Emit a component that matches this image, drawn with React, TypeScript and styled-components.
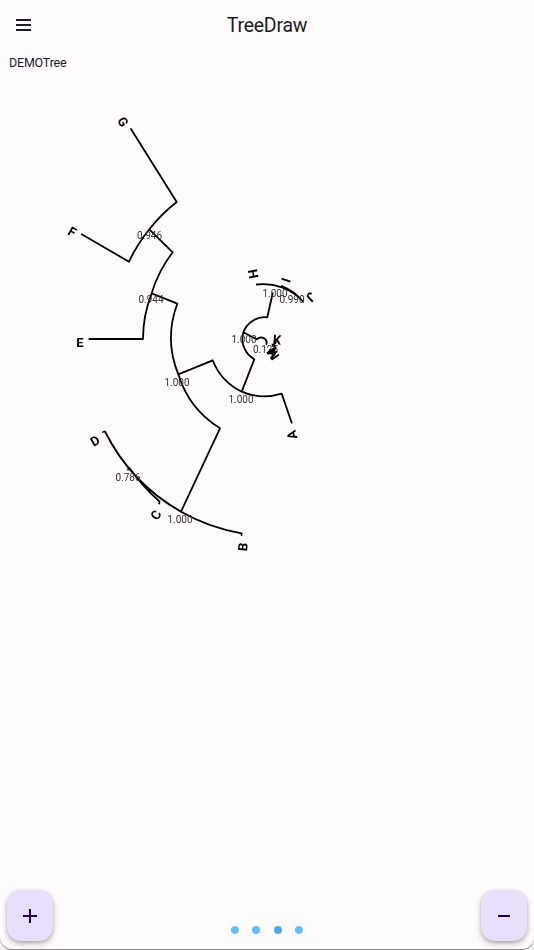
import React from "react";
import styled, { createGlobalStyle } from "styled-components";

const Global = createGlobalStyle`
  html, body { margin: 0; padding: 0; background: #f1eff1; }
  #root { width: 534px; height: 950px; }
`;

const Screen = styled.div`
  width: 534px;
  height: 949px;
  display: flex;
  flex-direction: column;
  background: #fffbfe;
  border-radius: 0 0 12px 12px;
  box-shadow: 0 1px 0 #8e8e8e;
  overflow: hidden;
  font-family: Roboto, "Liberation Sans", sans-serif;
  color: #1c1b1f;
`;

const AppBar = styled.header`
  height: 50px;
  display: flex;
  align-items: center;
  justify-content: center;
  position: relative;
  flex: none;
`;

const MenuButton = styled.div`
  position: absolute;
  left: 16px;
  top: 19px;
  width: 15px;
  height: 12px;
  display: flex;
  flex-direction: column;
  justify-content: space-between;
`;

const MenuBar = styled.span`
  display: block;
  height: 2px;
  background: #1c1b1f;
`;

const Title = styled.h1`
  margin: 0;
  font-size: 19.5px;
  letter-spacing: -0.25px;
  font-weight: 400;
`;

const TreeName = styled.div`
  flex: none;
  padding: 5px 0 0 9px;
  font-size: 12.5px;
  letter-spacing: -0.2px;
  line-height: 16px;
`;

const Canvas = styled.main`
  flex: 1;
  min-height: 0;
`;

const TreeSvg = styled.svg`
  display: block;
  width: 534px;
  height: 820px;
  will-change: transform;
`;

const Branches = styled.path`
  fill: none;
  stroke: #000;
  stroke-width: 1.8;
  stroke-linecap: round;
  stroke-linejoin: round;
`;

const LeafLabel = styled.text`
  font-size: 13px;
  font-weight: 700;
  fill: #000;
  text-anchor: middle;
  dominant-baseline: central;
`;

const Support = styled.text`
  font-size: 10px;
  fill: #333;
  text-anchor: middle;
  dominant-baseline: central;
`;

const BottomBar = styled.footer`
  flex: none;
  height: 51px;
  margin-bottom: 8px;
  padding: 0 7px;
  display: flex;
  justify-content: space-between;
`;

const Fab = styled.button`
  width: 46px;
  height: 51px;
  border: 0;
  padding: 0;
  border-radius: 14px;
  background: #e8dffc;
  color: #21005d;
  display: flex;
  align-items: center;
  justify-content: center;
  box-shadow: 0 3px 6px rgba(0, 0, 0, 0.25), 0 1px 3px rgba(0, 0, 0, 0.15);
`;

const Dots = styled.div`
  display: flex;
  gap: 13.5px;
  padding-top: 35.5px;
`;

const Dot = styled.span<{ $active?: boolean }>`
  display: block;
  width: 8px;
  height: 8px;
  border-radius: 50%;
  background: ${(p) => (p.$active ? "#48a8ef" : "#64befb")};
`;

const OFFSET = 66; // chart coordinates are page coordinates; the canvas starts below the header

const branchPath = [
  "M131 129 L176.7 202 A160 160 0 0 0 149.3 229.3 A160 160 0 0 0 129 261.7 L81.7 234.3",
  "M149.3 229.3 L172.7 252.3 A125 125 0 0 0 151.7 293.3 A125 125 0 0 0 143 339 L89.3 339",
  "M151.7 293.3 L177.3 303.7 A97 97 0 0 0 178.3 374.3 A97 97 0 0 0 220 428.3 L181 511.7",
  "M103 432 L105 431.5 A190 190 0 0 0 181 511.7 A190 190 0 0 0 241.7 533.3 L241.5 535",
  "M128 469.5 L129.5 468 A190 190 0 0 0 159.5 501.5 L159.2 503.5",
  "M178.3 374.3 L212.7 360.3 A58 58 0 0 0 241.7 391.7 A58 58 0 0 0 281.7 393.7 L291.7 422.7",
  "M241.7 391.7 L254.3 359.3 A23.5 23.5 0 0 1 243.3 332.3 A23.5 23.5 0 0 1 267.3 317.3 L272.7 293.3",
  "M256.7 284.5 A54 54 0 0 1 303 301.5",
  "M281.7 286 A52 52 0 0 1 303 301.5",
  "M243.3 332.3 L256.7 339.3 A6 6 0 0 1 266.7 341.7 L266.5 344",
  "M273 346 L276 342 M270 350 L274 352 M272 354 L275 349 M271 358 L276 352",
].join(" ");

const leaves: [string, number, number, number][] = [
  ["G", 123, 122, 58],
  ["F", 72, 232, 30],
  ["E", 80, 342, 0],
  ["D", 95, 441, -31],
  ["C", 156, 515, -58],
  ["B", 243, 547, -84],
  ["A", 292, 435, -105],
  ["M", 273, 354, -125],
  ["L", 272, 349, -140],
  ["K", 277, 340, 5],
  ["J", 311, 297, 137],
  ["I", 286, 280, 109],
  ["H", 253, 274, 79],
];

const supports: [string, number, number][] = [
  ["0.946", 149.5, 235.5],
  ["0.944", 151, 299.5],
  ["1.000", 177, 382],
  ["1.000", 241, 399.5],
  ["1.000", 244, 339],
  ["0.125", 265.5, 349],
  ["1.000", 275, 293],
  ["0.990", 292, 299],
  ["0.786", 128, 477.5],
  ["1.000", 180, 519],
];

export default function App() {
  return (
    <Screen>
      <Global />
      <AppBar>
        <MenuButton>
          <MenuBar />
          <MenuBar />
          <MenuBar />
        </MenuButton>
        <Title>TreeDraw</Title>
      </AppBar>
      <TreeName>DEMOTree</TreeName>
      <Canvas>
        <TreeSvg viewBox={`0 ${OFFSET + 5} 534 820`}>
          <Branches d={branchPath} />
          {supports.map(([t, x, y], i) => (
            <Support key={i} x={x} y={y}>
              {t}
            </Support>
          ))}
          {leaves.map(([t, x, y, r]) => (
            <LeafLabel key={t} x={x} y={y} transform={`rotate(${r} ${x} ${y})`}>
              {t}
            </LeafLabel>
          ))}
        </TreeSvg>
      </Canvas>
      <BottomBar>
        <Fab aria-label="zoom in">
          <svg width="14" height="14" viewBox="0 0 14 14">
            <path d="M0 7H14M7 0V14" stroke="currentColor" strokeWidth="2" />
          </svg>
        </Fab>
        <Dots>
          <Dot />
          <Dot />
          <Dot $active />
          <Dot />
        </Dots>
        <Fab aria-label="zoom out">
          <svg width="14" height="14" viewBox="0 0 14 14">
            <path d="M1 7H13" stroke="currentColor" strokeWidth="2" />
          </svg>
        </Fab>
      </BottomBar>
    </Screen>
  );
}
